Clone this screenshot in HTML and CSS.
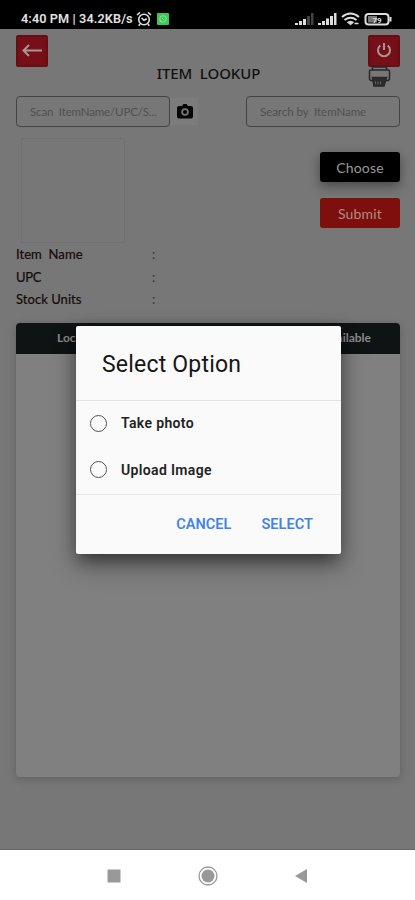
FILE: index.html
```html
<!DOCTYPE html>
<html lang="en">
<head>
<meta charset="utf-8">
<title>Item Lookup</title>
<link rel="stylesheet" href="styles.css">
</head>
<body>
<div class="phone">
  <header class="status">
    <span class="clock">4:40 PM | 34.2KB/s</span>
    <svg class="alarm" width="16" height="16" viewBox="0 0 16 16" fill="none" stroke="#ddd" stroke-width="1.6"><circle cx="8" cy="8.500" r="5.300"/><path d="M1 4l3-2.600M15 4l-3-2.600M5.500 7L8 9.200l2.800-1.500M4 13l-1.300 1.700M12 13l1.300 1.700"/></svg>
    <svg class="app-dot" width="12" height="12" viewBox="0 0 12 12"><rect width="12" height="12" rx="1" fill="#3fc65a"/><circle cx="6" cy="6" r="3.300" fill="none" stroke="#8be69c"/><path d="M3 9l1-2M5 5l2 2" stroke="#8be69c"/></svg>
    <svg class="signals" width="97" height="14" viewBox="0 0 97 14">
      <g fill="#ddd"><path d="M0 11h3v2H0zM4 9h3v4H4zM8 7h3v6H8zM23 11h3v2h-3zM27 9h3v4h-3zM31 6.500h3V13h-3zM35 4h3v9h-3zM39 1h2.500v12H39z"/></g>
      <path d="M12 4h3v9h-3zM16 1h2.500v12H16z" fill="#444"/>
      <g fill="none" stroke="#ddd" stroke-width="2"><path d="M47 5q8.500-7 17 0M49.500 8q6-4.500 12 0"/><path d="M52.500 10.300q3-2 6 0l-3 2.500z" fill="#ddd" stroke-width="1"/><path d="M59.500 11.500h4" stroke-width="1.500"/><rect x="70.500" y="2" width="23" height="10.500" rx="3"/><path d="M95.500 5v4.500"/></g>
      <rect x="73" y="4" width="9" height="6.500" fill="#777"/><text x="77.500" y="10.500" class="battery">79</text>
    </svg>
  </header>
  <main class="app">
    <div class="top">
      <button class="square" aria-label="Back"><svg width="32" height="32" viewBox="0 0 32 32" fill="none" stroke="#a69595" stroke-width="2"><path d="M26 15.500H8M13 10l-5.500 5.500L13 21"/></svg></button>
      <h1>ITEM&nbsp; LOOKUP</h1>
      <div class="tools">
        <button class="square" aria-label="Power"><svg width="32" height="32" viewBox="0 0 32 32" fill="none" stroke="#a69595" stroke-width="2"><path d="M12.300 10.500a6 6 0 1 0 7.400 0M16 8v7"/></svg></button>
        <svg class="printer" width="24" height="22" viewBox="0 0 24 22" fill="none" stroke="#282828" stroke-width="1.500"><path d="M4.500 4V1h14v3M5 14.500H2.500l-1-1.500V5.500q0-1.500 1.500-1.500h17q1.500 0 1.500 1.500V13l-1 1.500H18"/><path d="M4.500 11.500h14l-2.500 8.500H6z" fill="#2d2d2d"/><path d="M7.500 15.500v2.500M10 15.500v3M12.500 15.500v3" stroke="#666" stroke-width="1"/></svg>
      </div>
    </div>
    <div class="search">
      <div class="field scan">Scan&nbsp; ItemName/UPC/S...</div>
      <div class="camera"><svg width="16" height="15" viewBox="0 0 16 15"><path d="M2 2h3l1.500-2h3L11 2h3q2 0 2 2v8.500q0 2-2 2H2q-2 0-2-2V4q0-2 2-2z" fill="#050505"/><circle cx="8" cy="8" r="3.800" fill="#777"/><circle cx="8" cy="8" r="2" fill="#050505"/></svg></div>
      <div class="field name">Search by&nbsp; ItemName</div>
    </div>
    <div class="media">
      <div class="preview"></div>
      <div class="actions"><button class="btn choose">Choose</button><button class="btn submit">Submit</button></div>
    </div>
    <dl class="details">
      <dt class="item">Item&nbsp; Name</dt><dd>:</dd>
      <dt class="upc">UPC</dt><dd>:</dd>
      <dt class="stock">Stock Units</dt><dd>:</dd>
    </dl>
    <section class="table"><div class="thead"><span>Location</span><span>Available</span></div></section>
    <div class="dialog" role="dialog">
      <h2>Select Option</h2>
      <div class="options">
        <label class="option"><span class="radio"></span><span class="take">Take photo</span></label>
        <label class="option"><span class="radio"></span><span class="upload">Upload Image</span></label>
      </div>
      <div class="footer"><button>CANCEL</button><button>SELECT</button></div>
    </div>
  </main>
  <nav class="nav">
    <svg width="14" height="14"><rect x=".5" y=".5" width="13" height="13" fill="#999"/></svg>
    <svg width="20" height="20" viewBox="0 0 20 20"><circle cx="10" cy="10" r="9" fill="none" stroke="#999" stroke-width="1.300"/><circle cx="10" cy="10" r="6.500" fill="#999"/></svg>
    <svg width="14" height="16"><path d="M13 1v14L1 8z" fill="#999"/></svg>
  </nav>
</div>
</body>
</html>
```
FILE: styles.css
```css
* { box-sizing: border-box; }
body { margin: 0; background: #fff; font-family: Lato, sans-serif; }
button { border: 0; padding: 0; font: inherit; background: none; }
.phone { width: 415px; height: 900px; display: flex; flex-direction: column; overflow: hidden; }
.status { height: 29px; background: #000; color: #e2e2e2; display: flex; align-items: center; padding: 9px 23px 0 21px; }
.clock { font: 600 12.7px/16px Roboto, sans-serif; white-space: nowrap; width: 112px; letter-spacing: .1px; }
.alarm { margin-left: 3px; }
.app-dot { margin-left: 5px; }
.signals { margin-left: auto; }
.battery { font: 700 8px Roboto, sans-serif; fill: #ddd; }
.app { position: relative; height: 821px; background: #777; padding: 6px 15px 0 16px; border-bottom: 1px solid #666; }
.top { display: grid; grid-template-columns: 32px 1fr 32px; height: 61px; }
.square { width: 32px; height: 32px; border-radius: 3px; background: #760f18; box-shadow: inset 0 0 0 2px #670d14; display: block; }
.square svg { display: block; }
h1 { margin: 28px 0 0; text-align: center; font: 500 15px/20px "Noto Sans", sans-serif; color: #111; padding-left: 1px; letter-spacing: -.1px; white-space: nowrap; }
.printer { display: block; margin: -1px 0 0 0; }
.search { display: flex; height: 31px; }
.field { height: 31px; border: 1px solid #444; border-radius: 4px; padding: 0 12px; line-height: 29px; font-size: 11.5px; color: #505050; white-space: nowrap; }
.scan { width: 154px; letter-spacing: -.15px; padding-left: 13px; }
.camera { width: 28px; height: 27px; margin: 2px 0; padding-left: 2px; background: #7c7c7c; display: grid; place-items: center; }
.name { width: 154px; margin-left: auto; letter-spacing: -.05px; padding-left: 13px; }
.media { display: flex; justify-content: space-between; padding: 11px 0 0 5px; height: 116px; }
.preview { width: 104px; height: 105px; border: 1px solid #707070; }
.actions { display: flex; flex-direction: column; gap: 16px; padding: 14px 0 0 0; }
.btn { width: 80px; height: 30px; border-radius: 3px; color: #999; font-size: 14px; letter-spacing: .2px; }
.choose { background: #000; box-shadow: 0 4px 12px #0006; }
.submit { background: #7d100c; color: #b08b87; }
.details { margin: 0; display: grid; grid-template-columns: 136px 1fr; grid-auto-rows: 22.7px; line-height: 22.7px; font-size: 13px; color: #140a0a; }
dt { -webkit-text-stroke: .2px #140a0a; }
.item { letter-spacing: .05px; }
.upc { letter-spacing: -.3px; }
.stock { letter-spacing: .05px; }
dd { margin: 0; color: #333; }
.table { margin-top: 12px; height: 454px; width: 384px; background: #808080; border-radius: 4px; box-shadow: 0 2px 10px #0003; overflow: hidden; }
.thead { height: 31px; background: #101314; color: #8b8b8b; font: 700 12px/30px Lato, sans-serif; display: flex; justify-content: space-between; padding: 0 29px 0 41px; }
.dialog { position: absolute; left: 76px; top: 297px; width: 265px; height: 228px; background: #fafafa; border-radius: 2px; box-shadow: 0 11px 15px -7px #0005, 0 12px 24px 2px #0004, 0 4px 18px #0003; font-family: Roboto, sans-serif; }
h2 { margin: 0; height: 75px; padding: 0 26px; border-bottom: 1px solid #e2e2e2; font: 400 23px/78px Roboto, sans-serif; color: #161616; letter-spacing: .2px; }
.options { height: 94px; border-bottom: 1px solid #e8e8e8; }
.option { display: flex; align-items: center; height: 46.5px; padding: 0 0 2px 14px; gap: 14px; font-weight: 600; font-size: 14px; color: #222; letter-spacing: .35px; }
.radio { width: 17px; height: 17px; border: 1.500px solid #555; border-radius: 50%; }
.footer { display: flex; justify-content: flex-end; gap: 30px; height: 59px; padding-right: 28px; }
.footer button { color: #4483e6; font-size: 14.500px; font-weight: 600; letter-spacing: .05px; }
.nav { flex: 1; background: #fff; display: flex; align-items: center; justify-content: space-between; padding: 2px 107px 0 107px; }
```
